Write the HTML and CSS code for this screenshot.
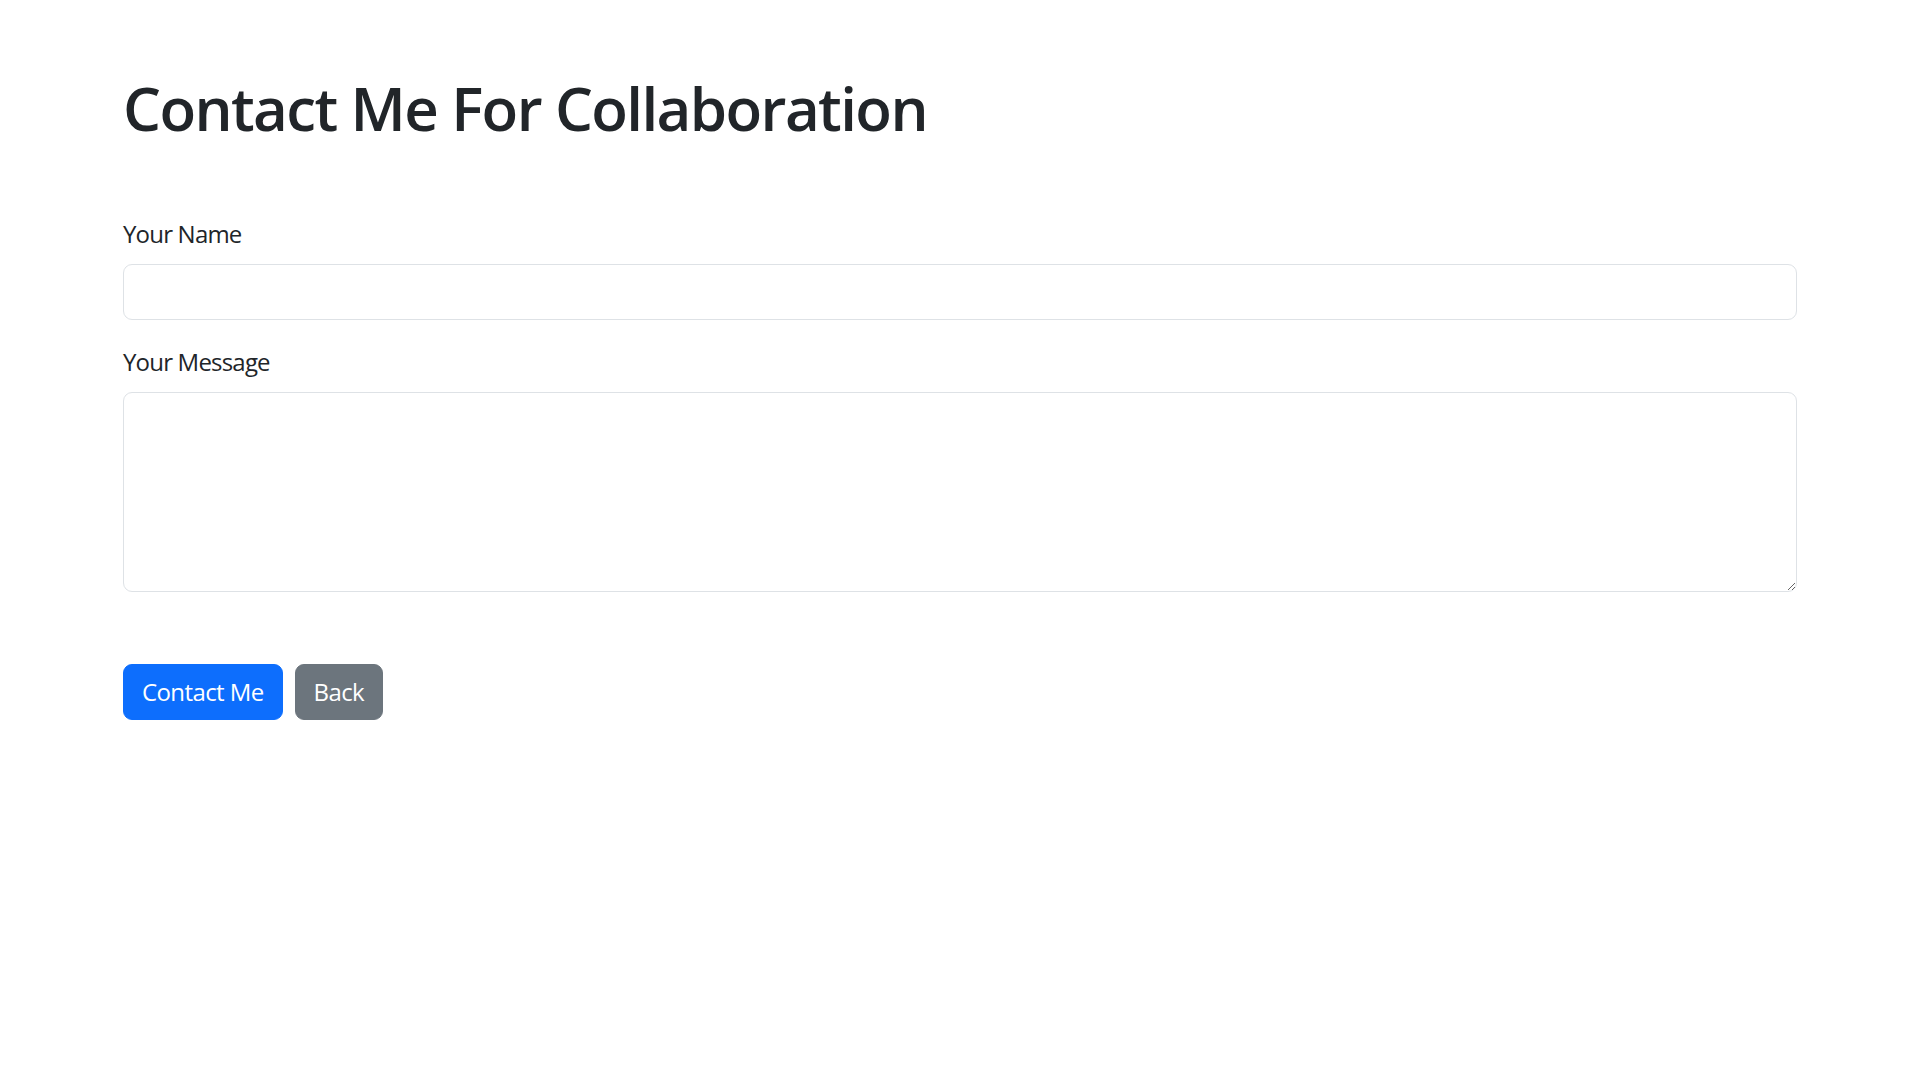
FILE: index.html
```html
<!DOCTYPE html>
<html lang="en">
<head>
<meta charset="utf-8">
<title>Contact Me For Collaboration</title>
<link rel="stylesheet" href="styles.css">
</head>
<body>
<div class="container">
  <h1 class="title">Contact Me For Collaboration</h1>
  <form class="contact-form">
    <div class="field">
      <label class="field-label" for="name">Your Name</label>
      <input class="field-control" type="text" id="name">
    </div>
    <div class="field">
      <label class="field-label" for="message">Your Message</label>
      <textarea class="field-control field-textarea" id="message" rows="5"></textarea>
    </div>
    <div class="actions">
      <button type="button" class="btn btn-primary">Contact Me</button>
      <button type="button" class="btn btn-secondary">Back</button>
    </div>
  </form>
</div>
</body>
</html>
```
FILE: styles.css
```css
* { box-sizing: border-box; }
html, body {
  margin: 0;
  padding: 0;
  background: #fff;
}
body {
  font-family: "Open Sans", "Noto Sans", sans-serif;
  font-size: 24px;
  line-height: 1.5;
  color: #212529;
}
.container {
  width: 1710px;
  margin: 72px auto 0;
  padding: 0 18px;
}
.title {
  font-size: 60px;
  font-weight: 600;
  line-height: 72px;
  margin: 0 0 72px;
  letter-spacing: -1.6px;
}
.contact-form {
  display: flex;
  flex-direction: column;
}
.field {
  display: flex;
  flex-direction: column;
  margin-bottom: 24px;
}
.field-label {
  display: block;
  margin-bottom: 12px;
  line-height: 36px;
  letter-spacing: -0.8px;
}
.field-control {
  display: block;
  width: 100%;
  height: 56px;
  padding: 9px 18px;
  font: inherit;
  color: #212529;
  background: #fff;
  border: 1px solid #dee2e6;
  border-radius: 9px;
  outline: none;
}
.field-textarea {
  height: 200px;
  resize: vertical;
}
.actions {
  display: flex;
  gap: 12px;
  margin-top: 48px;
}
.btn {
  font: inherit;
  line-height: 36px;
  height: 56px;
  padding: 9px 18px;
  border: 1px solid transparent;
  border-radius: 9px;
  color: #fff;
  cursor: pointer;
  letter-spacing: -0.6px;
}
.btn-primary {
  background: #0d6efd;
  border-color: #0d6efd;
}
.btn-secondary {
  background: #6c757d;
  border-color: #6c757d;
}
```
